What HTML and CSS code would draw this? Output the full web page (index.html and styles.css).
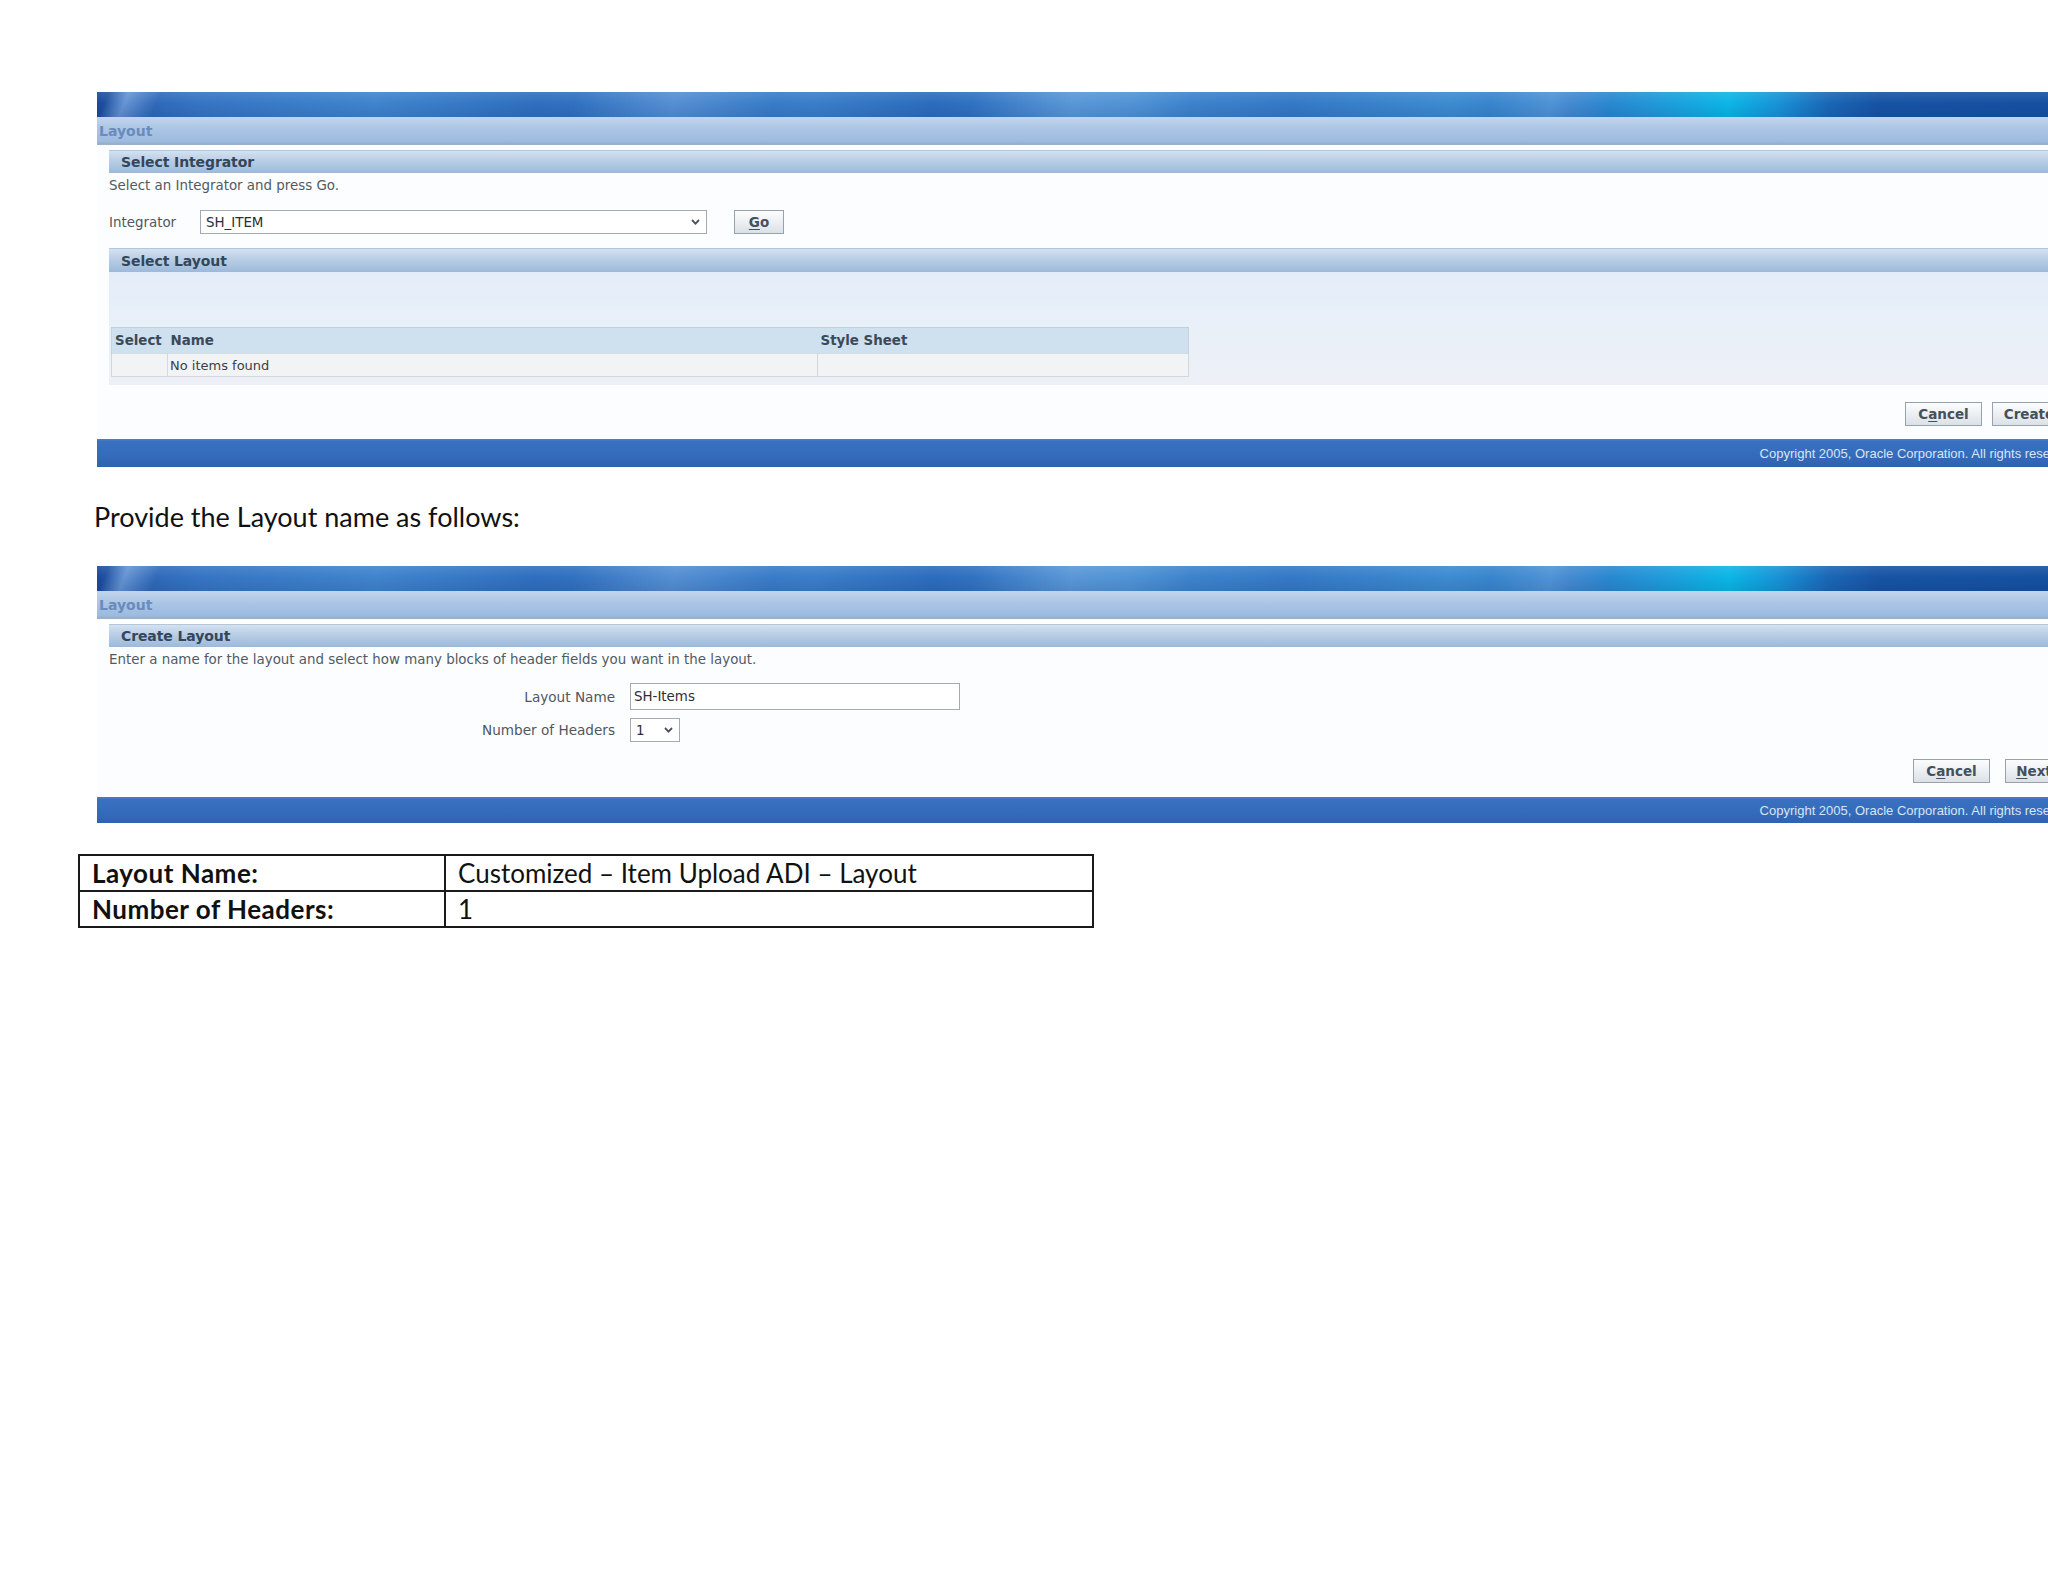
FILE: index.html
```html
<!DOCTYPE html>
<html lang="en">
<head>
<meta charset="utf-8">
<title>Layout</title>
<link rel="stylesheet" href="styles.css">
</head>
<body>
<div class="page">

  <section class="shot shot-one">
    <div class="shot-inner">
      <div class="banner"></div>
      <div class="title-band"><span class="title">Layout</span></div>
      <div class="region">
        <div class="sec-head">Select Integrator</div>
        <div class="hint">Select an Integrator and press Go.</div>
        <div class="int-row">
          <span class="lbl">Integrator</span>
          <div class="selectbox sel-wide">
            <span class="sel-value">SH_ITEM</span>
            <svg class="chev" width="9" height="6" viewBox="0 0 9 6"><path d="M1 1 L4.5 4.6 L8 1" fill="none" stroke="#4a535c" stroke-width="1.8"/></svg>
          </div>
          <button class="btn btn-go" type="button"><u>G</u>o</button>
        </div>
        <div class="sec-head sec-gap">Select Layout</div>
        <div class="panel">
          <table class="grid">
            <thead>
              <tr><th class="c-sel">Select</th><th class="c-name">Name</th><th class="c-style">Style Sheet</th></tr>
            </thead>
            <tbody>
              <tr><td></td><td>No items found</td><td></td></tr>
            </tbody>
          </table>
        </div>
        <div class="actions actions-one">
          <button class="btn btn-cancel" type="button">C<u>a</u>ncel</button>
          <button class="btn btn-create" type="button">Create</button>
        </div>
      </div>
      <div class="footer footer-one"><span class="copy">Copyright 2005, Oracle Corporation. All rights reserved.</span></div>
    </div>
  </section>

  <p class="para">Provide the Layout name as follows:</p>

  <section class="shot shot-two">
    <div class="shot-inner">
      <div class="banner"></div>
      <div class="title-band"><span class="title">Layout</span></div>
      <div class="region">
        <div class="sec-head">Create Layout</div>
        <div class="hint">Enter a name for the layout and select how many blocks of header fields you want in the layout.</div>
        <div class="form">
          <div class="form-row">
            <span class="flbl">Layout Name</span>
            <div class="textbox">SH-Items</div>
          </div>
          <div class="form-row row-gap">
            <span class="flbl">Number of Headers</span>
            <div class="selectbox sel-small">
              <span class="sel-value">1</span>
              <svg class="chev" width="9" height="6" viewBox="0 0 9 6"><path d="M1 1 L4.5 4.6 L8 1" fill="none" stroke="#4a535c" stroke-width="1.8"/></svg>
            </div>
          </div>
        </div>
        <div class="actions actions-two">
          <button class="btn btn-cancel" type="button">C<u>a</u>ncel</button>
          <button class="btn btn-next" type="button"><u>N</u>ext</button>
        </div>
      </div>
      <div class="footer footer-two"><span class="copy">Copyright 2005, Oracle Corporation. All rights reserved.</span></div>
    </div>
  </section>

  <table class="doc-table">
    <tr><th>Layout Name:</th><td>Customized – Item Upload ADI – Layout</td></tr>
    <tr><th>Number of Headers:</th><td>1</td></tr>
  </table>

</div>
</body>
</html>
```

FILE: styles.css
```css
html, body {
  margin: 0;
  padding: 0;
  background: #ffffff;
  overflow-x: hidden;
}

.page {
  padding-top: 92px;
  padding-bottom: 40px;
}

/* ---------- Oracle screenshot blocks ---------- */
.shot {
  margin-left: 97px;
  width: 1951px;
  overflow: hidden;
  font-family: Tahoma, "DejaVu Sans", sans-serif;
  font-size: 13.4px;
  color: #4b545c;
}

.shot-inner {
  width: 1990px;
  background: #fcfdfe;
}

.banner {
  height: 25px;
  background:
    linear-gradient(180deg, rgba(255,255,255,0.10), rgba(255,255,255,0) 45%, rgba(0,20,70,0.10)),
    linear-gradient(112deg, rgba(255,255,255,0) 0.6%, rgba(150,190,240,0.55) 1.6%, rgba(255,255,255,0) 3.2%),
    linear-gradient(100deg, rgba(255,255,255,0) 24%, rgba(160,200,245,0.30) 29%, rgba(255,255,255,0) 34%),
    linear-gradient(100deg, rgba(255,255,255,0) 44%, rgba(170,210,250,0.28) 49%, rgba(255,255,255,0) 55%),
    linear-gradient(100deg, rgba(255,255,255,0) 70%, rgba(170,215,250,0.25) 73%, rgba(255,255,255,0) 76%),
    linear-gradient(90deg, #1b4a98 0%, #2c62b2 1.5%, #3574c3 5%, #3f84cd 14%, #2f6fbf 22%, #3a7ec9 36%,
      #2c6cbd 42%, #4189cf 52%, #3479c6 60%, #3d8bd0 68%, #2f7ac8 74%, #2296d8 78%, #0bb6e6 82%,
      #1892d6 84.5%, #1a67b6 87%, #1753a4 89.5%, #1450a0 100%);
}

.title-band {
  height: 28px;
  box-sizing: border-box;
  background: linear-gradient(180deg, #c3d5ec 0%, #aac5e5 45%, #9dbbe0 90%, #94adcc 100%);
  border-bottom: 1px solid #9fb0c6;
  display: flex;
  align-items: center;
}

.title {
  padding-left: 2px;
  font-weight: bold;
  font-size: 14px;
  color: #6a8bbb;
}

.region {
  padding-left: 12px;
}

.sec-head {
  margin-top: 5px;
  height: 23px;
  box-sizing: border-box;
  padding-left: 12px;
  display: flex;
  align-items: center;
  font-weight: bold;
  font-size: 14px;
  letter-spacing: -0.1px;
  color: #33465a;
  border-top: 1px solid #b3c6da;
  background: linear-gradient(180deg, #d3e2f1 0%, #bccfe6 40%, #a9c3e0 75%, #9db9da 100%);
}

.sec-gap {
  margin-top: 14px;
  height: 24px;
}

.hint {
  height: 26px;
  line-height: 26px;
  color: #515a63;
  white-space: nowrap;
}

.int-row {
  margin-top: 11px;
  display: flex;
  align-items: center;
  height: 24px;
}

.lbl {
  width: 91px;
  color: #4f575f;
  font-size: 13.4px;
}

.selectbox {
  box-sizing: border-box;
  height: 24px;
  border: 1px solid #a3aab2;
  background: #ffffff;
  display: flex;
  align-items: center;
  justify-content: space-between;
  padding: 0 6px 0 5px;
  color: #2a2f34;
  font-size: 13.4px;
}

.sel-wide {
  width: 507px;
}

.sel-small {
  width: 50px;
}

.chev {
  display: block;
}

.btn {
  box-sizing: border-box;
  height: 24px;
  padding: 0;
  border: 1px solid #96a2ae;
  background: linear-gradient(180deg, #fbfcfd 0%, #eef1f4 45%, #dbe1e7 100%);
  font-family: Tahoma, "DejaVu Sans", sans-serif;
  font-weight: bold;
  font-size: 13.5px;
  color: #44505c;
  display: inline-flex;
  align-items: center;
  justify-content: center;
}

.btn u {
  text-decoration-thickness: 1px;
  text-underline-offset: 2px;
}

.btn-go {
  width: 50px;
  margin-left: 27px;
}

.btn-cancel {
  width: 77px;
}

.btn-create {
  width: 74px;
}

.btn-next {
  width: 58px;
}

.panel {
  height: 113px;
  box-sizing: border-box;
  padding-top: 55px;
  padding-left: 2px;
  background: linear-gradient(180deg, #e3edf9 0%, #e9f0f8 50%, #edf0f7 100%);
}

.grid {
  border-collapse: collapse;
  width: 1078px;
  font-size: 13px;
}

.grid th {
  height: 26px;
  box-sizing: border-box;
  padding: 0 0 0 3px;
  text-align: left;
  font-weight: bold;
  font-size: 13.4px;
  color: #3b4a59;
  background: #cfe0ee;
  border-top: 1px solid #c4d0dc;
}

.grid th.c-sel {
  width: 56px;
  border-left: 1px solid #c8d2dc;
}

.grid th.c-name {
  width: 650px;
}

.grid th.c-style {
  border-right: 1px solid #c8d2dc;
}

.grid td {
  height: 23px;
  box-sizing: border-box;
  padding: 0 0 0 2px;
  background: #f2f3f5;
  color: #3a3f45;
  border: 1px solid #d3d8de;
  border-top: 1px solid #d6dce3;
}

.actions {
  display: flex;
  justify-content: flex-end;
  align-items: center;
  height: 24px;
}

.actions-one {
  margin-top: 17px;
  gap: 10px;
  padding-right: 21px;
}

.actions-two {
  margin-top: 17px;
  gap: 15px;
  padding-right: 24px;
}

.footer {
  display: flex;
  justify-content: flex-end;
  align-items: center;
  padding-right: 8px;
  background: linear-gradient(180deg, #4b7fc8 0%, #3a70c0 10%, #356bbb 60%, #2f62b0 100%);
}

.footer-one {
  margin-top: 13px;
  height: 28px;
}

.footer-two {
  margin-top: 14px;
  height: 26px;
}

.copy {
  font-family: Arial, "Liberation Sans", sans-serif;
  font-size: 13px;
  color: #d9e4f3;
  white-space: nowrap;
}

/* form in second screenshot */
.form {
  margin-top: 10px;
}

.form-row {
  display: flex;
  align-items: center;
}

.row-gap {
  margin-top: 8px;
}

.flbl {
  width: 521px;
  box-sizing: border-box;
  padding-right: 15px;
  text-align: right;
  font-size: 13.6px;
  color: #4f575f;
}

.textbox {
  box-sizing: border-box;
  width: 330px;
  height: 27px;
  border: 1px solid #a3aab2;
  background: #ffffff;
  display: flex;
  align-items: center;
  padding-left: 3px;
  color: #2a2f34;
  font-size: 13.4px;
}

/* ---------- document text ---------- */
.para {
  margin: 35px 0 0 94px;
  height: 30px;
  line-height: 30px;
  font-family: Lato, "Liberation Sans", sans-serif;
  font-size: 27px;
  color: #111111;
}

.shot-two {
  margin-top: 34px;
}

.doc-table {
  margin: 31px 0 0 78px;
  border-collapse: collapse;
  width: 1016px;
  font-family: Lato, "Liberation Sans", sans-serif;
  font-size: 26px;
  color: #111111;
}

.doc-table th,
.doc-table td {
  border: 2px solid #1a1a1a;
  height: 36px;
  box-sizing: border-box;
  padding: 0 12px;
  text-align: left;
  line-height: 1;
}

.doc-table th {
  width: 366px;
  font-weight: bold;
  letter-spacing: 0.5px;
}

.doc-table td {
  font-weight: normal;
}
```
